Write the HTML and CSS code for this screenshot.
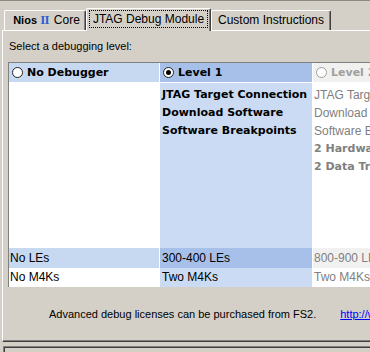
FILE: index.html
```html
<!DOCTYPE html>
<html>
<head>
<meta charset="utf-8">
<link rel="stylesheet" href="styles.css">
</head>
<body>
<div class="window">
  <div class="tabs">
    <div class="tab tab-nios"><b class="nios">Nios</b> <span class="two">II</span> Core</div>
    <div class="tab tab-jtag selected"><span class="focus">JTAG Debug Module</span></div>
    <div class="tab tab-custom">Custom Instructions</div>
  </div>
  <div class="panel">
    <p class="prompt">Select a debugging level:</p>
    <div class="levels">
      <div class="level level-none">
        <div class="head"><span class="radio"></span>No Debugger</div>
        <div class="features"></div>
        <div class="stat les">No LEs</div>
        <div class="stat m4k">No M4Ks</div>
      </div>
      <div class="level level-one">
        <div class="head"><span class="radio checked"></span>Level 1</div>
        <div class="features">
          <div class="feat new">JTAG Target Connection</div>
          <div class="feat new">Download Software</div>
          <div class="feat new">Software Breakpoints</div>
        </div>
        <div class="stat les">300-400 LEs</div>
        <div class="stat m4k">Two M4Ks</div>
      </div>
      <div class="level level-two">
        <div class="head"><span class="radio"></span>Level 2</div>
        <div class="features">
          <div class="feat">JTAG Target Connection</div>
          <div class="feat">Download Software</div>
          <div class="feat">Software Breakpoints</div>
          <div class="feat new">2 Hardware Breakpoints</div>
          <div class="feat new">2 Data Triggers</div>
        </div>
        <div class="stat les">800-900 LEs</div>
        <div class="stat m4k">Two M4Ks</div>
      </div>
    </div>
    <div class="footer"><span>Advanced debug licenses can be purchased from FS2.</span><a class="link" href="#">http://www.fs2.com</a></div>
  </div>
  <div class="status"></div>
</div>
</body>
</html>
```

FILE: styles.css
```css
html, body {
  margin: 0;
  padding: 0;
}
body {
  width: 370px;
  height: 352px;
  overflow: hidden;
  background: #d4d0c8;
  font-family: "Liberation Sans", Arial, sans-serif;
  font-size: 11px;
  color: #000;
}
.window {
  width: 480px;
  border-top: 1px solid #8d8a84;
}
.tabs {
  position: relative;
  z-index: 2;
  display: flex;
  align-items: flex-start;
  height: 22px;
  margin-top: 7px;
  padding-left: 4px;
}
.tab {
  box-sizing: border-box;
  height: 20px;
  margin-top: 2px;
  border-top: 1px solid #fff;
  border-left: 1px solid #fff;
  border-right: 1px solid #404040;
  border-radius: 2px 2px 0 0;
  box-shadow: inset -1px 0 #808080;
  background: #d4d0c8;
  font-size: 12px;
  line-height: 18px;
  text-align: center;
  white-space: nowrap;
}
.tab-nios { width: 82px; padding-left: 3px; }
.tab-jtag { width: 125px; }
.tab-custom { width: 120px; }
.selected {
  height: 23px;
  margin-top: 0;
  padding: 1px 2px 0 2px;
}
.focus {
  display: block;
  height: 18px;
  line-height: 18px;
  outline: 1px dotted #000;
  outline-offset: -1px;
}
.nios {
  font-size: 11px;
  font-weight: bold;
}
.two {
  font-family: "Liberation Serif", "Times New Roman", serif;
  font-weight: bold;
  font-size: 13px;
  letter-spacing: -1px;
  color: #2f5fd0;
  margin-right: 2px;
}
.panel {
  box-sizing: border-box;
  height: 312px;
  margin-left: 2px;
  border-top: 1px solid #fff;
  border-left: 1px solid #fff;
  border-bottom: 1px solid #404040;
  box-shadow: inset 0 -1px #808080;
  padding: 8px 0 0 6px;
}
.prompt {
  margin: 0;
  line-height: 14px;
}
.levels {
  display: grid;
  grid-template-columns: 150px 152px 151px;
  column-gap: 1px;
  margin: 9px 0 0 -1px;
  background: #fff;
  border-top: 1px solid #808080;
  border-left: 1px solid #808080;
  width: max-content;
}
.level {
  display: flex;
  flex-direction: column;
}
.head {
  box-sizing: border-box;
  height: 20px;
  border-bottom: 1px solid #fff;
  display: flex;
  align-items: center;
  gap: 4px;
  padding-left: 3px;
  font-family: "DejaVu Sans", Verdana, sans-serif;
  font-weight: bold;
  font-size: 11px;
}
.radio {
  box-sizing: border-box;
  width: 11px;
  height: 11px;
  border: 1px solid #222;
  border-radius: 50%;
  background: #fff;
  display: flex;
  align-items: center;
  justify-content: center;
}
.radio.checked::after {
  content: "";
  width: 5px;
  height: 5px;
  border-radius: 50%;
  background: #000;
}
.features {
  height: 165px;
  padding: 3px 0 0 2px;
  box-sizing: border-box;
}
.feat {
  line-height: 18px;
  font-size: 12px;
  white-space: nowrap;
}
.feat.new {
  font-family: "DejaVu Sans", Verdana, sans-serif;
  font-weight: bold;
  font-size: 11px;
}
.stat {
  padding-left: 1px;
  font-size: 12px;
  white-space: nowrap;
}
.les {
  height: 20px;
  line-height: 20px;
}
.m4k {
  height: 19px;
  line-height: 19px;
}
.level-one .stat { padding-left: 2px; }
.level-two .stat { padding-left: 1px; }

.level-none .head { background: #c7d8f1; }
.level-none .features { background: #fff; }
.level-none .les { background: #c7d8f1; }
.level-none .m4k { background: #fff; }

.level-one .head { background: #a6c0ea; }
.level-one .features { background: #cadbf3; }
.level-one .les { background: #a6c0ea; }
.level-one .m4k { background: #cadbf3; }

.level-two { color: #808080; }
.level-two .features { padding-left: 1px; }
.level-two .head { background: #f1f1ef; color: #a0a0a0; }
.level-two .head .radio { border-color: #a0a0a0; }
.level-two .features { background: #fff; }
.level-two .les { background: #f1f1f1; }
.level-two .m4k { background: #fff; }

.footer {
  margin-top: 20px;
  padding-left: 40px;
  line-height: 14px;
  white-space: nowrap;
}
.link {
  margin-left: 24px;
  color: #0000ff;
  text-decoration: underline;
}
.status {
  height: 12px;
  margin: 4px 0 0 3px;
  border-top: 1px solid #808080;
  border-left: 1px solid #808080;
  box-shadow: inset 1px 1px #404040;
}
```
